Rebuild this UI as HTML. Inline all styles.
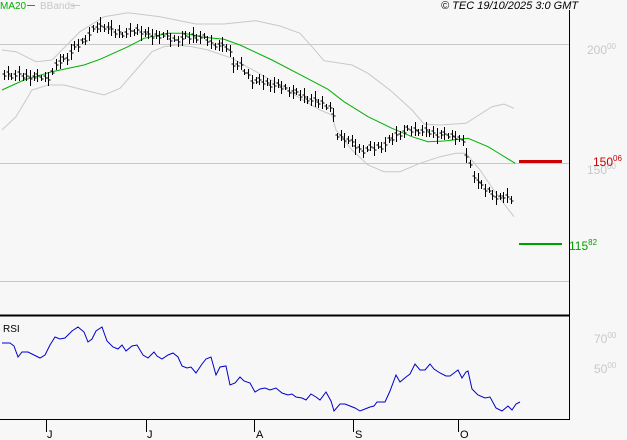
<!DOCTYPE html>
<html><head><style>
body{margin:0;background:#f7f7f7;}
svg{display:block;font-family:"Liberation Sans",sans-serif;}
</style></head><body>
<svg id="s" width="627" height="440" viewBox="0 0 627 440" xmlns="http://www.w3.org/2000/svg">
<rect width="627" height="440" fill="#f7f7f7"/>
<g stroke="#c8c8c8" stroke-width="1">
<line x1="0" y1="44.5" x2="569" y2="44.5"/>
<line x1="0" y1="163.5" x2="569" y2="163.5"/>
<line x1="0" y1="281.5" x2="569" y2="281.5"/>
</g>
<polyline id="ub" fill="none" stroke="#c8c8c8" stroke-width="1"/>
<polyline id="lb" fill="none" stroke="#c8c8c8" stroke-width="1"/>
<polyline id="ma" fill="none" stroke="#00b000" stroke-width="1"/>
<path id="bars" fill="none" stroke="#000" stroke-width="1"/>
<polyline id="rsi" fill="none" stroke="#0000cc" stroke-width="1"/>
<line x1="569.5" y1="10" x2="569.5" y2="420" stroke="#000"/>
<line x1="0" y1="315.5" x2="569" y2="315.5" stroke="#000" stroke-width="2"/>
<line x1="0" y1="419.5" x2="569" y2="419.5" stroke="#000"/>
<g stroke="#000"><line x1="46.5" y1="420" x2="46.5" y2="432"/><line x1="146.5" y1="420" x2="146.5" y2="432"/><line x1="254.5" y1="420" x2="254.5" y2="432"/><line x1="353.5" y1="420" x2="353.5" y2="432"/><line x1="458.5" y1="420" x2="458.5" y2="432"/></g>
<g font-size="11" fill="#000"><text x="47" y="438">J</text><text x="147" y="438">J</text><text x="256" y="438">A</text><text x="355" y="438">S</text><text x="460" y="438">O</text></g>
<rect x="519" y="160" width="43" height="3" fill="#cc0000"/>
<rect x="519" y="243" width="43" height="2" fill="#00a000"/>
<text x="0" y="9" font-size="10" fill="#00b000">MA20</text><line x1="27" y1="5.5" x2="35" y2="5.5" stroke="#00b000"/>
<text x="40" y="9" font-size="10" fill="#c8c8c8">BBands</text><line x1="71" y1="5.5" x2="80" y2="5.5" stroke="#c8c8c8"/>
<text x="441" y="9" font-size="11" font-style="italic" fill="#000">© TEC 19/10/2025 3:0 GMT</text>
<text x="587" y="54" font-size="12" fill="#c8c8c8">200<tspan font-size="8" dy="-5">00</tspan></text>
<text x="587" y="174" font-size="12" fill="#c8c8c8">150<tspan font-size="8" dy="-5">00</tspan></text>
<text x="593" y="166" font-size="12" fill="#cc0000">150<tspan font-size="8" dy="-5">06</tspan></text>
<text x="569" y="250" font-size="12" fill="#00a000">115<tspan font-size="8" dy="-5">82</tspan></text>
<text x="594" y="343" font-size="12" fill="#c8c8c8">70<tspan font-size="8" dy="-5">00</tspan></text>
<text x="594" y="373" font-size="12" fill="#c8c8c8">50<tspan font-size="8" dy="-5">00</tspan></text>
<text x="3" y="332" font-size="10" fill="#000">RSI</text>
</svg>
<script>
function sc(a){return a.map(p=>(p[0]/2.5).toFixed(1)+','+(p[1]/3).toFixed(1)).join(' ');}
document.getElementById('ma').setAttribute('points',sc([[5,270],[60,240],[130,215],[210,195],[250,178],[320,140],[360,115],[420,100],[460,100],[510,112],[560,118],[600,135],[680,180],[760,230],[820,268],[860,305],[920,350],[980,385],[1030,410],[1070,425],[1110,423],[1170,415],[1220,440],[1250,462],[1288,490]]));
document.getElementById('ub').setAttribute('points',sc([[5,150],[40,155],[90,185],[130,180],[200,95],[260,50],[320,38],[400,50],[490,72],[560,72],[640,62],[700,78],[750,100],[780,140],[810,182],[880,195],[920,220],[980,275],[1030,330],[1060,372],[1100,375],[1165,370],[1230,320],[1260,312],[1285,325]]));
document.getElementById('lb').setAttribute('points',sc([[5,390],[40,350],[80,270],[120,255],[160,255],[210,270],[260,285],[300,265],[340,210],[380,155],[410,140],[440,135],[480,140],[520,150],[580,175],[640,215],[700,255],[750,295],[800,330],[830,345],[840,390],[880,450],[920,495],[960,515],[1000,515],[1050,490],[1100,470],[1140,460],[1165,460],[1200,510],[1240,580],[1285,650]]));
var c=[[4,74],[48,78],[60,60],[66,58],[74,48],[84,40],[96,27],[102,25],[114,32],[126,33],[138,30],[150,36],[162,35],[174,40],[192,36],[204,38],[210,42],[216,45],[228,47],[234,65],[240,65],[252,80],[264,82],[282,87],[300,95],[312,100],[324,104],[332,108],[336,135],[348,140],[360,150],[372,148],[384,145],[396,135],[408,130],[420,130],[432,133],[444,135],[456,136],[462,140],[468,160],[474,175],[480,185],[486,190],[492,193],[498,200],[504,196],[510,197],[514,200]];
function f(x){for(var i=0;i<c.length-1;i++){if(x<=c[i+1][0]){var t=(x-c[i][0])/(c[i+1][0]-c[i][0]);return c[i][1]+t*(c[i+1][1]-c[i][1]);}}return c[c.length-1][1];}
var d='',k=0;for(var x=4;x<=514;x+=3.7){k++;var y=f(x),h=6+((k*37)%11),o=((k*53)%5)-2;var X=Math.round(x)+0.5;d+='M'+X+' '+(y-h/2+o).toFixed(0)+'V'+(y+h/2+o).toFixed(0)+'M'+(X-2)+' '+(y+o-1).toFixed(0)+'h2M'+X+' '+(y+o+1).toFixed(0)+'h2';}
document.getElementById('bars').setAttribute('d',d);
document.getElementById('rsi').setAttribute('points',[[2,343],[10,343],[14,346],[18,357],[22,352],[28,352],[40,358],[45,355],[50,345],[55,337],[60,339],[65,338],[72,331],[78,327],[84,332],[88,342],[92,339],[96,331],[102,327],[107,341],[113,347],[118,349],[122,345],[126,351],[132,346],[137,345],[143,355],[148,358],[154,352],[157,356],[162,359],[168,355],[173,353],[178,357],[182,366],[187,368],[191,367],[196,373],[202,364],[206,359],[211,357],[216,375],[220,367],[226,366],[230,385],[235,383],[240,377],[244,381],[250,383],[255,392],[260,389],[265,388],[270,390],[276,388],[282,393],[288,395],[292,394],[296,397],[302,398],[306,400],[311,394],[316,397],[320,400],[326,392],[331,401],[334,411],[340,404],[345,404],[350,406],[355,408],[360,411],[365,409],[370,407],[374,406],[377,402],[385,402],[390,391],[396,375],[400,382],[406,377],[410,374],[415,364],[420,370],[425,370],[430,364],[434,369],[440,373],[446,376],[450,376],[454,373],[458,370],[462,378],[466,372],[468,371],[472,389],[478,395],[485,398],[490,397],[496,408],[502,411],[508,406],[512,410],[516,404],[520,402]].map(p=>p[0]+','+p[1]).join(' '));
</script>
</body></html>
